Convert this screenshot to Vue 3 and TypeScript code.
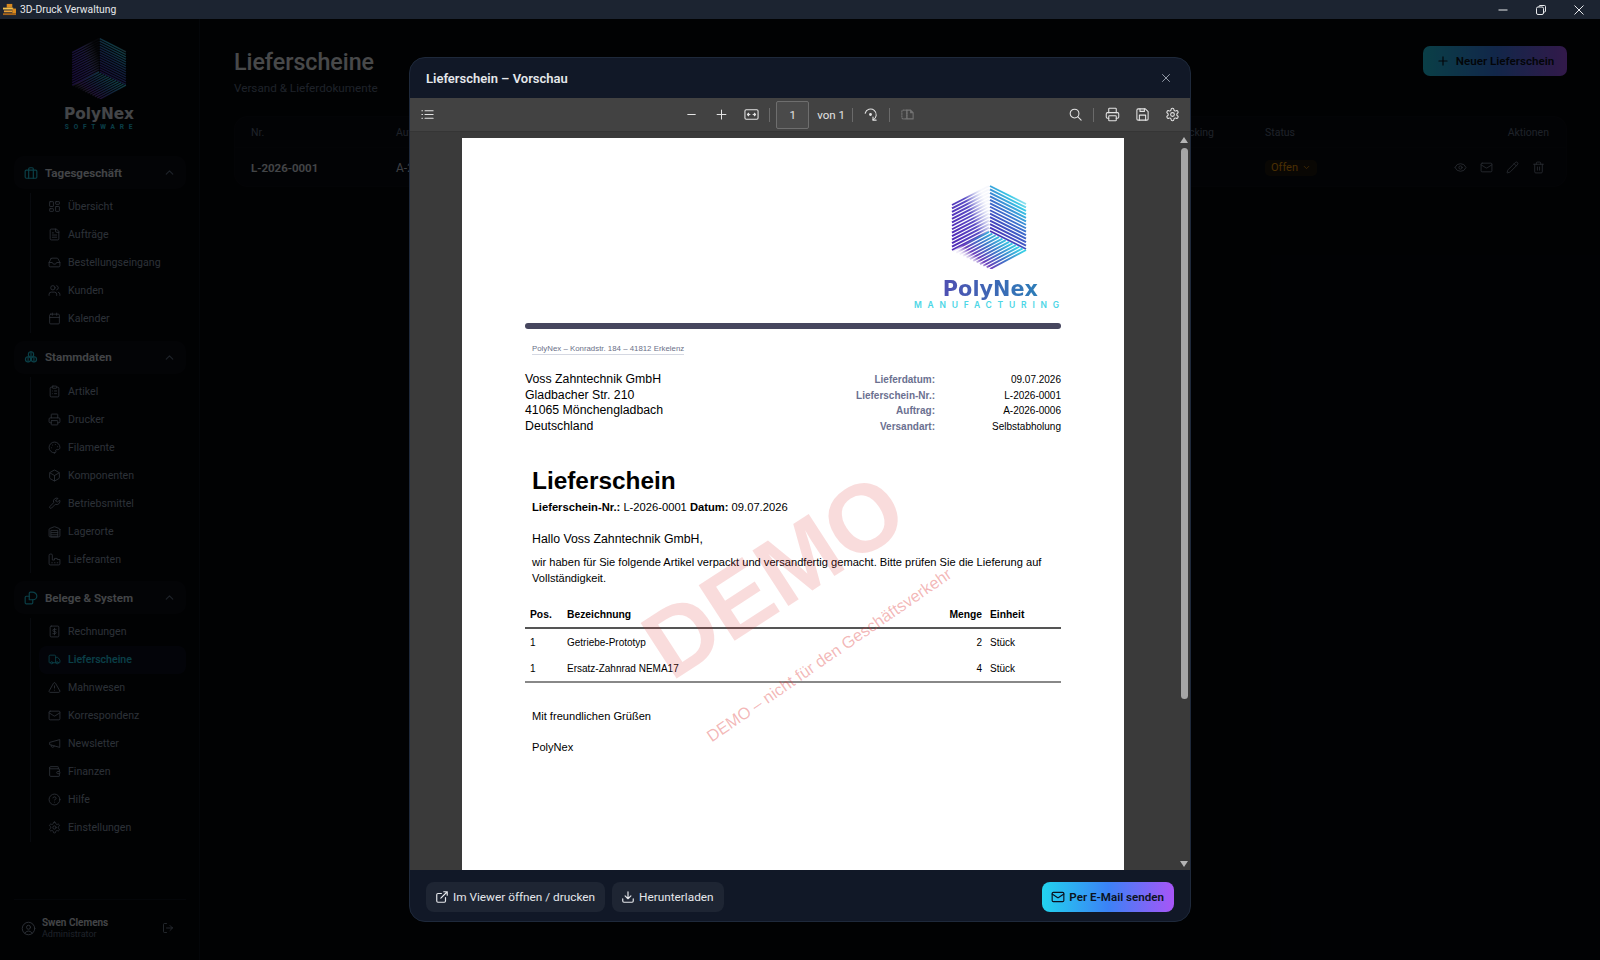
<template>
  <div class="window">
    <!-- Titelleiste -->
    <div class="titlebar">
      <svg class="app-icon" viewBox="0 0 14 14">
        <rect x="4" y="1" width="6" height="4" fill="#d98a1f" />
        <rect x="0" y="5" width="11" height="2" fill="#f2c14e" />
        <rect x="1" y="8" width="9" height="2" fill="#e8a13a" />
        <rect x="0" y="11" width="14" height="2" fill="#a8651a" />
        <rect x="10" y="6" width="4" height="5" fill="#d98a1f" />
      </svg>
      <span class="app-title">3D-Druck Verwaltung</span>
      <div class="win-controls">
        <svg viewBox="0 0 12 12"><path d="M1.5 6h9" /></svg>
        <svg viewBox="0 0 12 12"><rect x="1.5" y="3" width="7" height="7.5" rx="1.5" /><path d="M4 3V2.5A1 1 0 0 1 5 1.5h4.5a1 1 0 0 1 1 1V7a1 1 0 0 1-1 1H8.5" /></svg>
        <svg viewBox="0 0 12 12"><path d="M1.5 1.5l9 9M10.5 1.5l-9 9" /></svg>
      </div>
    </div>

    <!-- Gemeinsame SVG-Definitionen fuer das Logo -->
    <svg class="defs" width="0" height="0">
      <defs>
        <linearGradient id="cubeL" gradientUnits="userSpaceOnUse" x1="0" y1="40" x2="38" y2="25">
          <stop offset="0" stop-color="#4f2bb8" />
          <stop offset="0.55" stop-color="#5a4cc4" />
          <stop offset="1" stop-color="#a9b4e8" stop-opacity="0.1" />
        </linearGradient>
        <linearGradient id="cubeR" gradientUnits="userSpaceOnUse" x1="39" y1="48" x2="78" y2="8">
          <stop offset="0" stop-color="#4a2bb5" />
          <stop offset="0.45" stop-color="#3a6fcc" />
          <stop offset="0.72" stop-color="#38c8e6" />
          <stop offset="1" stop-color="#bfeef0" stop-opacity="0.3" />
        </linearGradient>
        <linearGradient id="cubeB" gradientUnits="userSpaceOnUse" x1="52" y1="50" x2="26" y2="82">
          <stop offset="0" stop-color="#38d0e6" />
          <stop offset="0.45" stop-color="#3f74c8" />
          <stop offset="0.8" stop-color="#6a3dbb" />
          <stop offset="1" stop-color="#b7a5df" stop-opacity="0.2" />
        </linearGradient>
        <symbol id="cube" viewBox="0 0 76 84">
          <g v-for="f in cubeFaces" :key="f.grad" :stroke="`url(#${f.grad})`" stroke-width="1.9">
            <line
              v-for="(l, i) in f.lines"
              :key="i"
              :x1="l.x1"
              :y1="l.y1"
              :x2="l.x2"
              :y2="l.y2"
            />
          </g>
        </symbol>
      </defs>
    </svg>

    <div class="app">
      <!-- Seitenleiste -->
      <aside class="sidebar">
        <div class="brand">
          <svg class="brand-cube"><use href="#cube" /></svg>
          <div class="brand-name">PolyNex</div>
          <div class="brand-sub">SOFTWARE</div>
        </div>

        <nav class="nav">
          <section v-for="g in navGroups" :key="g.title" class="nav-group">
            <div class="group-head">
              <svg class="ico group-ico" viewBox="0 0 24 24" v-html="icons[g.icon]"></svg>
              <span class="group-title">{{ g.title }}</span>
              <svg class="ico chevron" viewBox="0 0 24 24" v-html="icons.chevronUp"></svg>
            </div>
            <ul class="group-items">
              <li
                v-for="item in g.items"
                :key="item.label"
                class="nav-item"
                :class="{ active: item.label === 'Lieferscheine' }"
              >
                <svg class="ico" viewBox="0 0 24 24" v-html="icons[item.icon]"></svg>
                <span>{{ item.label }}</span>
              </li>
            </ul>
          </section>
        </nav>

        <div class="user">
          <svg class="ico user-ico" viewBox="0 0 24 24" v-html="icons.user"></svg>
          <div class="user-text">
            <div class="user-name">Swen Clemens</div>
            <div class="user-role">Administrator</div>
          </div>
          <svg class="ico logout" viewBox="0 0 24 24" v-html="icons.logout"></svg>
        </div>
      </aside>

      <!-- Hauptbereich -->
      <main class="main">
        <header class="main-head">
          <div>
            <h1>Lieferscheine</h1>
            <p>Versand &amp; Lieferdokumente</p>
          </div>
          <button type="button" class="btn-new">
            <svg class="ico" viewBox="0 0 24 24" v-html="icons.plus"></svg>
            Neuer Lieferschein
          </button>
        </header>

        <div class="card">
          <div class="row row-head">
            <span>Nr.</span>
            <span>Auftrag</span>
            <span>Tracking</span>
            <span>Status</span>
            <span class="right">Aktionen</span>
          </div>
          <div class="row row-body">
            <strong>L-2026-0001</strong>
            <span>A-2026-0006</span>
            <span></span>
            <span><span class="badge">Offen <svg class="ico" viewBox="0 0 24 24" v-html="icons.chevronDown"></svg></span></span>
            <span class="actions">
              <svg v-for="a in rowActions" :key="a" class="ico" viewBox="0 0 24 24" v-html="icons[a]"></svg>
            </span>
          </div>
        </div>
      </main>

      <!-- Vorschau-Dialog -->
      <div class="overlay">
        <div class="modal">
          <div class="modal-head">
            <h2>Lieferschein – Vorschau</h2>
            <svg class="ico close" viewBox="0 0 24 24" v-html="icons.x"></svg>
          </div>

          <div class="pdf-toolbar">
            <div class="tb-side">
              <span class="tb-btn"><svg viewBox="0 0 24 24" v-html="icons.outline"></svg></span>
            </div>
            <div class="tb-center">
              <span class="tb-btn"><svg viewBox="0 0 24 24" v-html="icons.minus"></svg></span>
              <span class="tb-btn"><svg viewBox="0 0 24 24" v-html="icons.plus"></svg></span>
              <span class="tb-btn"><svg viewBox="0 0 24 24" v-html="icons.fit"></svg></span>
              <i class="tb-sep"></i>
              <span class="page-input">1</span>
              <span class="page-count">von 1</span>
              <i class="tb-sep"></i>
              <span class="tb-btn"><svg viewBox="0 0 24 24" v-html="icons.rotate"></svg></span>
              <i class="tb-sep"></i>
              <span class="tb-btn dim"><svg viewBox="0 0 24 24" v-html="icons.spread"></svg></span>
            </div>
            <div class="tb-side tb-end">
              <span class="tb-btn"><svg viewBox="0 0 24 24" v-html="icons.search"></svg></span>
              <i class="tb-sep"></i>
              <span class="tb-btn"><svg viewBox="0 0 24 24" v-html="icons.printer"></svg></span>
              <span class="tb-btn"><svg viewBox="0 0 24 24" v-html="icons.save"></svg></span>
              <span class="tb-btn"><svg viewBox="0 0 24 24" v-html="icons.settings"></svg></span>
            </div>
          </div>

          <div class="pdf-body">
            <div class="pdf-scroll">
              <article class="sheet">
                <div class="doc-logo">
                  <svg class="doc-cube"><use href="#cube" /></svg>
                  <div class="doc-name">PolyNex</div>
                  <div class="doc-sub">MANUFACTURING</div>
                </div>
                <div class="doc-rule"></div>
                <div class="doc-sender"><span>PolyNex – Konradstr. 184 – 41812 Erkelenz</span></div>

                <div class="doc-top">
                  <div class="doc-address">
                    <div v-for="l in address" :key="l">{{ l }}</div>
                  </div>
                  <dl class="doc-meta">
                    <template v-for="m in docMeta" :key="m.label">
                      <dt>{{ m.label }}</dt>
                      <dd>{{ m.value }}</dd>
                    </template>
                  </dl>
                </div>

                <div class="doc-text">
                  <h3>Lieferschein</h3>
                  <p class="doc-ref"><b>Lieferschein-Nr.:</b> L-2026-0001 <b>Datum:</b> 09.07.2026</p>
                  <p class="doc-hello">Hallo Voss Zahntechnik GmbH,</p>
                  <p class="doc-para">wir haben für Sie folgende Artikel verpackt und versandfertig gemacht. Bitte prüfen Sie die Lieferung auf Vollständigkeit.</p>
                </div>

                <table class="doc-table">
                  <thead>
                    <tr>
                      <th class="c-pos">Pos.</th>
                      <th>Bezeichnung</th>
                      <th class="c-qty">Menge</th>
                      <th class="c-unit">Einheit</th>
                    </tr>
                  </thead>
                  <tbody>
                    <tr v-for="p in positions" :key="p.name">
                      <td class="c-pos">1</td>
                      <td>{{ p.name }}</td>
                      <td class="c-qty">{{ p.qty }}</td>
                      <td>Stück</td>
                    </tr>
                  </tbody>
                </table>

                <div class="doc-text">
                  <p class="doc-bye">Mit freundlichen Grüßen</p>
                  <p class="doc-sign">PolyNex</p>
                </div>

                <div class="wm-big">DEMO</div>
                <div class="wm-small">DEMO – nicht für den Geschäftsverkehr</div>
              </article>
            </div>
            <div class="pdf-scrollbar">
              <i class="arrow-up"></i>
              <i class="thumb"></i>
              <i class="arrow-down"></i>
            </div>
          </div>

          <div class="modal-foot">
            <button type="button" class="btn-dark">
              <svg class="ico" viewBox="0 0 24 24" v-html="icons.external"></svg>
              Im Viewer öffnen / drucken
            </button>
            <button type="button" class="btn-dark">
              <svg class="ico" viewBox="0 0 24 24" v-html="icons.download"></svg>
              Herunterladen
            </button>
            <button type="button" class="btn-send">
              <svg class="ico" viewBox="0 0 24 24" v-html="icons.mail"></svg>
              Per E-Mail senden
            </button>
          </div>
        </div>
      </div>
    </div>
  </div>
</template>

<script setup lang="ts">
interface Pt {
  x: number
  y: number
}

interface NavGroup {
  title: string
  icon: string
  items: { label: string; icon: string }[]
}

const gear =
  '<path d="M12.22 2h-.44a2 2 0 0 0-2 2v.18a2 2 0 0 1-1 1.73l-.43.25a2 2 0 0 1-2 0l-.15-.08a2 2 0 0 0-2.73.73l-.22.38a2 2 0 0 0 .73 2.73l.15.1a2 2 0 0 1 1 1.72v.51a2 2 0 0 1-1 1.74l-.15.09a2 2 0 0 0-.73 2.73l.22.38a2 2 0 0 0 2.73.73l.15-.08a2 2 0 0 1 2 0l.43.25a2 2 0 0 1 1 1.73V20a2 2 0 0 0 2 2h.44a2 2 0 0 0 2-2v-.18a2 2 0 0 1 1-1.73l.43-.25a2 2 0 0 1 2 0l.15.08a2 2 0 0 0 2.73-.73l.22-.39a2 2 0 0 0-.73-2.73l-.15-.08a2 2 0 0 1-1-1.74v-.5a2 2 0 0 1 1-1.74l.15-.09a2 2 0 0 0 .73-2.73l-.22-.38a2 2 0 0 0-2.73-.73l-.15.08a2 2 0 0 1-2 0l-.43-.25a2 2 0 0 1-1-1.73V4a2 2 0 0 0-2-2z"/><circle cx="12" cy="12" r="3"/>'

const icons: Record<string, string> = {
  briefcase: '<rect x="2" y="7" width="20" height="14" rx="2"/><path d="M16 21V5a2 2 0 0 0-2-2h-4a2 2 0 0 0-2 2v16"/>',
  boxes: '<circle cx="12" cy="7.5" r="4.5"/><circle cx="7" cy="16" r="4.5"/><circle cx="17" cy="16" r="4.5"/><path d="M12 3v9M7 12v8M17 12v8"/>',
  files: '<path d="M9 15V4a2 2 0 0 1 2-2h3a8 6.5 0 0 1 8 6.5 6.5 6.5 0 0 1-6.5 6.5z"/><path d="M15 15v5a2 2 0 0 1-2 2H4a2 2 0 0 1-2-2v-9a2 2 0 0 1 2-2h5"/>',
  grid: '<rect x="3" y="3" width="7" height="9" rx="1"/><rect x="14" y="3" width="7" height="5" rx="1"/><rect x="14" y="12" width="7" height="9" rx="1"/><rect x="3" y="16" width="7" height="5" rx="1"/>',
  file: '<path d="M15 2H6a2 2 0 0 0-2 2v16a2 2 0 0 0 2 2h12a2 2 0 0 0 2-2V7Z"/><path d="M14 2v4a2 2 0 0 0 2 2h4"/><path d="M16 13H8M16 17H8M10 9H8"/>',
  inbox: '<path d="M22 12h-6l-2 3h-4l-2-3H2"/><path d="M5.45 5.11 2 12v6a2 2 0 0 0 2 2h16a2 2 0 0 0 2-2v-6l-3.45-6.89A2 2 0 0 0 16.76 4H7.24a2 2 0 0 0-1.79 1.11z"/>',
  users: '<path d="M16 21v-2a4 4 0 0 0-4-4H6a4 4 0 0 0-4 4v2"/><circle cx="9" cy="7" r="4"/><path d="M22 21v-2a4 4 0 0 0-3-3.87M16 3.13a4 4 0 0 1 0 7.75"/>',
  calendar: '<path d="M8 2v4M16 2v4"/><rect x="3" y="4" width="18" height="18" rx="2"/><path d="M3 10h18"/>',
  clipboard: '<rect x="8" y="2" width="8" height="4" rx="1"/><path d="M16 4h2a2 2 0 0 1 2 2v14a2 2 0 0 1-2 2H6a2 2 0 0 1-2-2V6a2 2 0 0 1 2-2h2"/><path d="M12 11h4M12 16h4M8 11h.01M8 16h.01"/>',
  printer: '<path d="M6 18H4a2 2 0 0 1-2-2v-5a2 2 0 0 1 2-2h16a2 2 0 0 1 2 2v5a2 2 0 0 1-2 2h-2"/><path d="M6 9V3a1 1 0 0 1 1-1h10a1 1 0 0 1 1 1v6"/><rect x="6" y="14" width="12" height="8" rx="1"/>',
  palette: '<path d="M12 22a10 10 0 1 1 10-10c0 2.5-2 4-4 4h-2a2 2 0 0 0-1.5 3.3c.5.7 0 2.7-2.5 2.7z"/><path d="M13.5 6.5h.01M17.5 10.5h.01M8.5 7.5h.01M6.5 12.5h.01"/>',
  package: '<path d="M21 8a2 2 0 0 0-1-1.73l-7-4a2 2 0 0 0-2 0l-7 4A2 2 0 0 0 3 8v8a2 2 0 0 0 1 1.73l7 4a2 2 0 0 0 2 0l7-4A2 2 0 0 0 21 16Z"/><path d="m3.3 7 8.7 5 8.7-5M12 22V12"/>',
  wrench: '<path d="M14.7 6.3a1 1 0 0 0 0 1.4l1.6 1.6a1 1 0 0 0 1.4 0l3.77-3.77a6 6 0 0 1-7.94 7.94l-6.91 6.91a2.12 2.12 0 0 1-3-3l6.91-6.91a6 6 0 0 1 7.94-7.94l-3.76 3.76z"/>',
  warehouse: '<path d="M22 8.35V20a2 2 0 0 1-2 2H4a2 2 0 0 1-2-2V8.35A2 2 0 0 1 3.26 6.5l8-3.2a2 2 0 0 1 1.48 0l8 3.2A2 2 0 0 1 22 8.35Z"/><path d="M6 18h12M6 14h12"/><rect x="6" y="10" width="12" height="12"/>',
  factory: '<path d="M2 20a2 2 0 0 0 2 2h16a2 2 0 0 0 2-2V12h-5v-2h-5v3H8V4a2 2 0 0 0-2-2H4a2 2 0 0 0-2 2Z"/><path d="M17 18h1M12 18h1M7 18h1"/>',
  receipt: '<rect x="4" y="2" width="16" height="20" rx="2"/><path d="M15 8h-4a1.8 1.8 0 0 0 0 4h2a1.8 1.8 0 0 1 0 4H9M12 6v12"/>',
  truck: '<path d="M14 18V6a2 2 0 0 0-2-2H4a2 2 0 0 0-2 2v11a1 1 0 0 0 1 1h2"/><path d="M15 18H9"/><path d="M19 18h2a1 1 0 0 0 1-1v-3.65a1 1 0 0 0-.22-.624l-3.48-4.35A1 1 0 0 0 17.52 8H14"/><circle cx="17" cy="18" r="2"/><circle cx="7" cy="18" r="2"/>',
  alert: '<path d="m21.73 18-8-14a2 2 0 0 0-3.48 0l-8 14A2 2 0 0 0 4 21h16a2 2 0 0 0 1.73-3"/><path d="M12 9v4M12 17h.01"/>',
  mail: '<rect x="2" y="4" width="20" height="16" rx="2"/><path d="m22 7-8.97 5.7a1.94 1.94 0 0 1-2.06 0L2 7"/>',
  megaphone: '<path d="m21 5-18 5v4l18 5z"/><path d="M11.6 16.8a3 3 0 1 1-5.8-1.6"/>',
  wallet: '<path d="M19 7V4a1 1 0 0 0-1-1H5a2 2 0 0 0 0 4h15a1 1 0 0 1 1 1v4h-3a2 2 0 0 0 0 4h3a1 1 0 0 0 1-1v-2a1 1 0 0 0-1-1"/><path d="M3 5v14a2 2 0 0 0 2 2h15a1 1 0 0 0 1-1v-4"/>',
  help: '<circle cx="12" cy="12" r="10"/><path d="M9.09 9a3 3 0 0 1 5.83 1c0 2-3 3-3 3M12 17h.01"/>',
  settings: gear,
  user: '<circle cx="12" cy="12" r="10"/><circle cx="12" cy="10" r="3.2"/><path d="M6.2 19.6a6.5 6.5 0 0 1 11.6 0"/>',
  logout: '<path d="M9 21H5a2 2 0 0 1-2-2V5a2 2 0 0 1 2-2h4"/><path d="m16 17 5-5-5-5M21 12H9"/>',
  eye: '<path d="M2.062 12.348a1 1 0 0 1 0-.696 10.75 10.75 0 0 1 19.876 0 1 1 0 0 1 0 .696 10.75 10.75 0 0 1-19.876 0"/><circle cx="12" cy="12" r="3"/>',
  pencil: '<path d="M21.174 6.812a1 1 0 0 0-3.986-3.987L3.842 16.174a2 2 0 0 0-.5.83l-1.321 4.352a.5.5 0 0 0 .623.622l4.353-1.32a2 2 0 0 0 .83-.497z"/><path d="m15 5 4 4"/>',
  trash: '<path d="M3 6h18M19 6v14a2 2 0 0 1-2 2H7a2 2 0 0 1-2-2V6M8 6V4a2 2 0 0 1 2-2h4a2 2 0 0 1 2 2v2M10 11v6M14 11v6"/>',
  external: '<path d="M15 3h6v6M10 14 21 3M18 13v6a2 2 0 0 1-2 2H5a2 2 0 0 1-2-2V8a2 2 0 0 1 2-2h6"/>',
  download: '<path d="M21 15v4a2 2 0 0 1-2 2H5a2 2 0 0 1-2-2v-4M7 10l5 5 5-5M12 15V3"/>',
  plus: '<path d="M5 12h14M12 5v14"/>',
  minus: '<path d="M6 12h12"/>',
  x: '<path d="M18 6 6 18M6 6l12 12"/>',
  chevronUp: '<path d="m18 15-6-6-6 6"/>',
  chevronDown: '<path d="m6 9 6 6 6-6"/>',
  outline: '<path d="M8 6h13M8 12h13M8 18h13M3 6h1M3 12h1M3 18h1"/>',
  fit: '<rect x="1.5" y="4.5" width="21" height="15" rx="2"/><path d="M5.5 12h4M14.5 12h4M7.5 10 5.5 12l2 2M16.5 10l2 2-2 2"/>',
  rotate: '<path d="M3.5 10a9 9 0 1 1 12.5 10.5"/><path d="M16 16v5h5"/><circle cx="12" cy="12" r="1.4" fill="currentColor"/>',
  spread: '<path d="M11 5H5a2 2 0 0 0-2 2v10a2 2 0 0 0 2 2h6z" stroke-dasharray="2 2"/><path d="M11 5h6l4 4v10h-10zM17 5v4h4"/>',
  search: '<circle cx="10.5" cy="10.5" r="7"/><path d="m21 21-5.5-5.5"/>',
  save: '<path d="M6 3h10.5L21 7.5V19a2 2 0 0 1-2 2H5a2 2 0 0 1-2-2V5a2 2 0 0 1 2-2z"/><path d="M7 21v-8h10v8M8 3v4h7V3"/>',
}

const navGroups: NavGroup[] = [
  {
    title: 'Tagesgeschäft',
    icon: 'briefcase',
    items: [
      { label: 'Übersicht', icon: 'grid' },
      { label: 'Aufträge', icon: 'file' },
      { label: 'Bestellungseingang', icon: 'inbox' },
      { label: 'Kunden', icon: 'users' },
      { label: 'Kalender', icon: 'calendar' },
    ],
  },
  {
    title: 'Stammdaten',
    icon: 'boxes',
    items: [
      { label: 'Artikel', icon: 'clipboard' },
      { label: 'Drucker', icon: 'printer' },
      { label: 'Filamente', icon: 'palette' },
      { label: 'Komponenten', icon: 'package' },
      { label: 'Betriebsmittel', icon: 'wrench' },
      { label: 'Lagerorte', icon: 'warehouse' },
      { label: 'Lieferanten', icon: 'factory' },
    ],
  },
  {
    title: 'Belege & System',
    icon: 'files',
    items: [
      { label: 'Rechnungen', icon: 'receipt' },
      { label: 'Lieferscheine', icon: 'truck' },
      { label: 'Mahnwesen', icon: 'alert' },
      { label: 'Korrespondenz', icon: 'mail' },
      { label: 'Newsletter', icon: 'megaphone' },
      { label: 'Finanzen', icon: 'wallet' },
      { label: 'Hilfe', icon: 'help' },
      { label: 'Einstellungen', icon: 'settings' },
    ],
  },
]

const rowActions = ['eye', 'mail', 'pencil', 'trash']

const address = ['Voss Zahntechnik GmbH', 'Gladbacher Str. 210', '41065 Mönchengladbach', 'Deutschland']

const docMeta = [
  { label: 'Lieferdatum:', value: '09.07.2026' },
  { label: 'Lieferschein-Nr.:', value: 'L-2026-0001' },
  { label: 'Auftrag:', value: 'A-2026-0006' },
  { label: 'Versandart:', value: 'Selbstabholung' },
]

const positions = [
  { name: 'Getriebe-Prototyp', qty: 2 },
  { name: 'Ersatz-Zahnrad NEMA17', qty: 4 },
]

// Streifen einer Wuerfelseite: Linien zwischen zwei parallelen Kanten
function stripes(a: Pt, b: Pt, c: Pt, d: Pt, n: number) {
  const lines = []
  for (let i = 0; i < n; i++) {
    const t = i / (n - 1)
    lines.push({
      x1: a.x + (c.x - a.x) * t,
      y1: a.y + (c.y - a.y) * t,
      x2: b.x + (d.x - b.x) * t,
      y2: b.y + (d.y - b.y) * t,
    })
  }
  return lines
}

const cubeFaces = [
  { grad: 'cubeL', lines: stripes({ x: 1, y: 20 }, { x: 38, y: 1 }, { x: 1, y: 65 }, { x: 38, y: 46 }, 14) },
  { grad: 'cubeR', lines: stripes({ x: 39, y: 1 }, { x: 75, y: 19 }, { x: 39, y: 46 }, { x: 75, y: 64 }, 14) },
  { grad: 'cubeB', lines: stripes({ x: 38, y: 47 }, { x: 2, y: 66 }, { x: 75, y: 65 }, { x: 39, y: 84 }, 12) },
]
</script>

<style>
html,
body {
  margin: 0;
  background: #000;
}
</style>

<style scoped>
.window {
  width: 1600px;
  height: 960px;
  display: flex;
  flex-direction: column;
  overflow: hidden;
  font-family: Roboto, 'Noto Sans', sans-serif;
}

.defs {
  position: absolute;
}

.ico {
  width: 14px;
  height: 14px;
  flex: none;
  fill: none;
  stroke: currentColor;
  stroke-width: 2;
  stroke-linecap: round;
  stroke-linejoin: round;
}

/* Titelleiste */
.titlebar {
  height: 19px;
  flex: none;
  background: #1c2431;
  color: #e7e9ec;
  display: flex;
  align-items: center;
  padding-left: 3px;
}

.app-icon {
  width: 13px;
  height: 13px;
}

.app-title {
  margin-left: 4px;
  font-size: 10.3px;
}

.win-controls {
  margin-left: auto;
  display: flex;
  gap: 26px;
  padding-right: 15px;
}

.win-controls svg {
  width: 12px;
  height: 12px;
  fill: none;
  stroke: #e7e9ec;
  stroke-width: 1;
}

/* App */
.app {
  flex: 1;
  display: flex;
  position: relative;
  min-height: 0;
  background: #05070d;
}

.sidebar {
  width: 200px;
  flex: none;
  box-sizing: border-box;
  border-right: 1px solid #10151f;
  display: flex;
  flex-direction: column;
  padding: 0 13px 0 14px;
}

.brand {
  display: flex;
  flex-direction: column;
  align-items: center;
  padding: 19px 2px 0 0;
  height: 137px;
  box-sizing: border-box;
}

.brand-cube {
  width: 56px;
  height: 61px;
}

.brand-name {
  margin-top: 6px;
  font-family: 'DejaVu Sans', sans-serif;
  font-weight: 700;
  font-size: 15.3px;
  line-height: 18px;
  color: #e2e8f0;
}

.brand-sub {
  font-size: 6.5px;
  line-height: 8px;
  font-weight: 700;
  letter-spacing: 4.8px;
  margin-right: -4px;
  color: #22d3ee;
}

.nav {
  flex: 1;
  display: flex;
  flex-direction: column;
  gap: 8px;
}

.group-head {
  height: 33px;
  border-radius: 10px;
  background: rgba(255, 255, 255, 0.035);
  display: flex;
  align-items: center;
  padding: 0 10px;
  color: #e2e8f0;
  font-size: 11.6px;
  font-weight: 600;
}

.group-ico {
  width: 14px;
  height: 14px;
  color: #22d3ee;
  margin-right: 7px;
}

.chevron {
  margin-left: auto;
  color: #64748b;
  width: 13px;
  height: 13px;
}

.group-items {
  list-style: none;
  margin: 3.5px 0 0 16px;
  padding: 0 0 0 8px;
  border-left: 1px solid #1b2230;
}

.nav-item {
  height: 28px;
  box-sizing: border-box;
  display: flex;
  align-items: center;
  gap: 7px;
  padding-left: 9px;
  border-radius: 8px;
  font-size: 10.6px;
  color: #94a3b8;
}

.nav-item .ico {
  width: 13px;
  height: 13px;
  stroke-width: 1.6;
}

.nav-item.active {
  background: rgba(99, 130, 255, 0.08);
  color: #22d3ee;
  font-weight: 500;
}

.user {
  height: 61px;
  flex: none;
  box-sizing: border-box;
  border-top: 1px solid #10151f;
  display: flex;
  align-items: center;
  padding: 0 12px 4px 7px;
  color: #94a3b8;
}

.user-ico {
  width: 15px;
  height: 15px;
  stroke-width: 1.5;
  margin-right: 6px;
}

.user-name {
  font-size: 10px;
  line-height: 12px;
  font-weight: 600;
  color: #e2e8f0;
}

.user-role {
  font-size: 9px;
  line-height: 11px;
  color: #64748b;
}

.logout {
  margin-left: auto;
  width: 12px;
  height: 12px;
  stroke-width: 1.6;
}

/* Hauptbereich */
.main {
  flex: 1;
  min-width: 0;
  padding: 27px 33px 0 34px;
}

.main-head {
  display: flex;
  justify-content: space-between;
  align-items: flex-start;
}

.main-head h1 {
  margin: 0;
  padding-top: 1px;
  font-size: 23.2px;
  line-height: 31px;
  font-weight: 500;
  color: #f1f5f9;
}

.main-head p {
  margin: 0;
  font-size: 11.7px;
  line-height: 20px;
  color: #64748b;
}

.btn-new {
  width: 144px;
  height: 30px;
  border: none;
  border-radius: 7px;
  background: linear-gradient(90deg, #22d3ee, #3b82f6, #a855f7);
  color: #0b1220;
  font: 600 11.6px Roboto, sans-serif;
  display: flex;
  align-items: center;
  justify-content: center;
  gap: 6px;
}

.card {
  margin-top: 18px;
  height: 71px;
  border-radius: 14px;
  background: rgba(255, 255, 255, 0.02);
  border: 1px solid rgba(255, 255, 255, 0.02);
  box-sizing: border-box;
}

.row {
  display: grid;
  grid-template-columns: 145px 778px 91px 1fr auto;
  align-items: center;
  padding: 0 17px 0 16px;
}

.row-head {
  height: 30px;
  font-size: 10.5px;
  color: #64748b;
  border-bottom: 1px solid rgba(255, 255, 255, 0.02);
}

.row-body {
  height: 39px;
  font-size: 12px;
  color: #cbd5e1;
}

.row-body strong {
  color: #e2e8f0;
  font-size: 11.5px;
  font-weight: 600;
}

.badge {
  display: inline-flex;
  align-items: center;
  gap: 4px;
  width: 52px;
  height: 16px;
  box-sizing: border-box;
  padding-left: 6px;
  border-radius: 5px;
  background: rgba(245, 158, 11, 0.1);
  color: #f59e0b;
  font-size: 11px;
}

.badge .ico {
  width: 9px;
  height: 9px;
}

.actions {
  display: flex;
  gap: 13px;
  padding-right: 4px;
  color: #8592a6;
}

.actions .ico {
  width: 13px;
  height: 13px;
  stroke-width: 1.6;
}

/* Dialog */
.overlay {
  position: absolute;
  inset: 0;
  background: rgba(0, 0, 0, 0.7);
  display: flex;
  align-items: center;
  justify-content: center;
}

.modal {
  width: 782px;
  height: 865px;
  box-sizing: border-box;
  border: 1px solid #1e293b;
  border-radius: 16px;
  background: #111827;
  display: flex;
  flex-direction: column;
  overflow: hidden;
}

.modal-head {
  height: 40px;
  flex: none;
  display: flex;
  align-items: center;
  justify-content: space-between;
  padding: 0 17px 0 16px;
}

.modal-head h2 {
  margin: 0;
  font-size: 13px;
  font-weight: 600;
  color: #e5e7eb;
}

.close {
  color: #9ca3af;
  width: 14px;
  height: 14px;
  stroke-width: 1.6;
}

.pdf-toolbar {
  height: 34px;
  flex: none;
  box-sizing: border-box;
  background: #424242;
  border-bottom: 1px solid #353535;
  display: flex;
  align-items: center;
  padding: 0 3px 0 2px;
  color: #e3e3e3;
}

.tb-side {
  flex: 1;
  display: flex;
  align-items: center;
}

.tb-end {
  justify-content: flex-end;
}

.tb-center {
  display: flex;
  align-items: center;
}

.tb-btn {
  width: 30px;
  height: 28px;
  display: flex;
  align-items: center;
  justify-content: center;
}

.tb-btn svg {
  width: 15px;
  height: 15px;
  fill: none;
  stroke: currentColor;
  stroke-width: 1.7;
  stroke-linecap: round;
  stroke-linejoin: round;
}

.tb-btn.dim {
  opacity: 0.3;
}

.tb-sep {
  width: 1px;
  height: 14px;
  margin: 0 3px;
  background: #6a6a6a;
}

.page-input {
  width: 33px;
  height: 28px;
  box-sizing: border-box;
  margin-left: 3px;
  border: 1px solid #6e6e6e;
  border-radius: 2px;
  background: #4a4a4a;
  display: flex;
  align-items: center;
  justify-content: center;
  font-size: 11.5px;
}

.page-count {
  margin: 0 4px 0 8px;
  font-size: 11.5px;
}

.pdf-body {
  flex: 1;
  min-height: 0;
  display: flex;
  background: #3a3a3a;
}

.pdf-scroll {
  flex: 1;
  min-width: 0;
  overflow: hidden;
  display: flex;
  justify-content: center;
  padding-top: 6px;
}

.pdf-scrollbar {
  width: 14px;
  flex: none;
  display: flex;
  flex-direction: column;
  align-items: center;
  padding: 5px 0 3px 2px;
  box-sizing: border-box;
}

.arrow-up,
.arrow-down {
  width: 0;
  height: 0;
  border-left: 4px solid transparent;
  border-right: 4px solid transparent;
}

.arrow-up {
  border-bottom: 6px solid #b5b5b5;
}

.arrow-down {
  margin-top: auto;
  border-top: 6px solid #b5b5b5;
}

.thumb {
  width: 7px;
  height: 551px;
  margin-top: 5px;
  border-radius: 4px;
  background: #a6a6a6;
}

/* Dokument */
.sheet {
  width: 662px;
  height: 900px;
  flex: none;
  box-sizing: border-box;
  padding: 47px 63px 0;
  background: #fff;
  color: #000;
  position: relative;
  font-family: 'Liberation Sans', Arial, sans-serif;
}

.doc-logo {
  display: flex;
  flex-direction: column;
  align-items: flex-end;
}

.doc-cube {
  width: 76px;
  height: 84px;
  margin-right: 34px;
}

.doc-name {
  margin: 9px 23px 0 0;
  font-family: 'DejaVu Sans', sans-serif;
  font-weight: 700;
  font-size: 20.8px;
  line-height: 22px;
  background: linear-gradient(90deg, #4f50b2, #2d7db8);
  -webkit-background-clip: text;
  background-clip: text;
  color: transparent;
}

.doc-sub {
  font-family: 'Inter', sans-serif;
  font-weight: 600;
  font-size: 8.5px;
  line-height: 10px;
  letter-spacing: 5.8px;
  margin-right: -4px;
  color: #4dd6e6;
}

.doc-rule {
  margin-top: 13px;
  height: 6px;
  border-radius: 3px;
  background: #46465e;
}

.doc-sender {
  margin: 13.5px 0 0 7px;
  font-size: 7.85px;
  line-height: 11px;
  color: #6b7088;
}

.doc-sender span {
  border-bottom: 1px solid #d5d8e2;
  display: inline-block;
}

.doc-top {
  margin-top: 17.5px;
  display: flex;
  justify-content: space-between;
}

.doc-address {
  font-size: 12.3px;
  line-height: 15.6px;
}

.doc-meta {
  margin: 0;
  display: grid;
  grid-template-columns: auto 126px;
  font-size: 10px;
  line-height: 15.6px;
  text-align: right;
}

.doc-meta dt {
  font-weight: 700;
  color: #6b7090;
}

.doc-meta dd {
  margin: 0;
}

.doc-text {
  padding-left: 7px;
}

.doc-text h3 {
  margin: 30px 0 0;
  font-size: 24.4px;
  line-height: 34px;
}

.doc-text p {
  margin: 0;
}

.doc-ref {
  margin-top: 1px !important;
  font-size: 11.2px;
  line-height: 16px;
}

.doc-hello {
  margin-top: 15.5px !important;
  font-size: 12.3px;
  line-height: 16px;
}

.doc-para {
  margin-top: 8.5px !important;
  font-size: 11.1px;
  line-height: 15.6px;
}

.doc-table {
  width: 100%;
  margin-top: 16px;
  border-collapse: collapse;
  table-layout: fixed;
  font-size: 10px;
}

.doc-table th,
.doc-table td {
  height: 27px;
  padding: 0 4px;
  text-align: left;
  box-sizing: border-box;
}

.doc-table th {
  height: 25.5px;
  font-size: 10.3px;
}

.doc-table thead tr {
  border-bottom: 2px solid #555;
}

.doc-table tbody {
  border-bottom: 2px solid #888;
}

.doc-table .c-pos {
  width: 38px;
  padding-left: 5px;
}

.doc-table .c-qty {
  text-align: right;
  width: 90px;
}

.doc-table .c-unit {
  width: 75px;
}

.doc-bye {
  margin-top: 25px !important;
  font-size: 11.1px;
  line-height: 16px;
}

.doc-sign {
  margin-top: 15px !important;
  font-size: 11.1px;
  line-height: 16px;
}

.wm-big {
  position: absolute;
  left: 312px;
  top: 438px;
  transform: translate(-50%, -50%) rotate(-33deg);
  font-size: 96px;
  line-height: 1;
  font-weight: 700;
  color: rgba(220, 50, 50, 0.17);
  white-space: nowrap;
}

.wm-small {
  position: absolute;
  left: 367px;
  top: 517px;
  transform: translate(-50%, -50%) rotate(-34.5deg);
  font-size: 16.5px;
  line-height: 1;
  color: rgba(220, 50, 50, 0.35);
  white-space: nowrap;
}

/* Fusszeile */
.modal-foot {
  height: 51px;
  flex: none;
  box-sizing: border-box;
  display: flex;
  align-items: center;
  gap: 7px;
  padding: 3px 16px 0;
}

.btn-dark,
.btn-send {
  height: 30px;
  box-sizing: border-box;
  border: none;
  border-radius: 8px;
  display: flex;
  align-items: center;
  gap: 4px;
  padding: 0 10px 0 9px;
  font: 400 11.8px Roboto, sans-serif;
}

.btn-dark {
  background: #1e2533;
  color: #e5e7eb;
}

.btn-send {
  margin-left: auto;
  background: linear-gradient(90deg, #22d3ee, #3b82f6, #a855f7);
  color: #0b1220;
  font-size: 11.6px;
  font-weight: 600;
}
</style>
